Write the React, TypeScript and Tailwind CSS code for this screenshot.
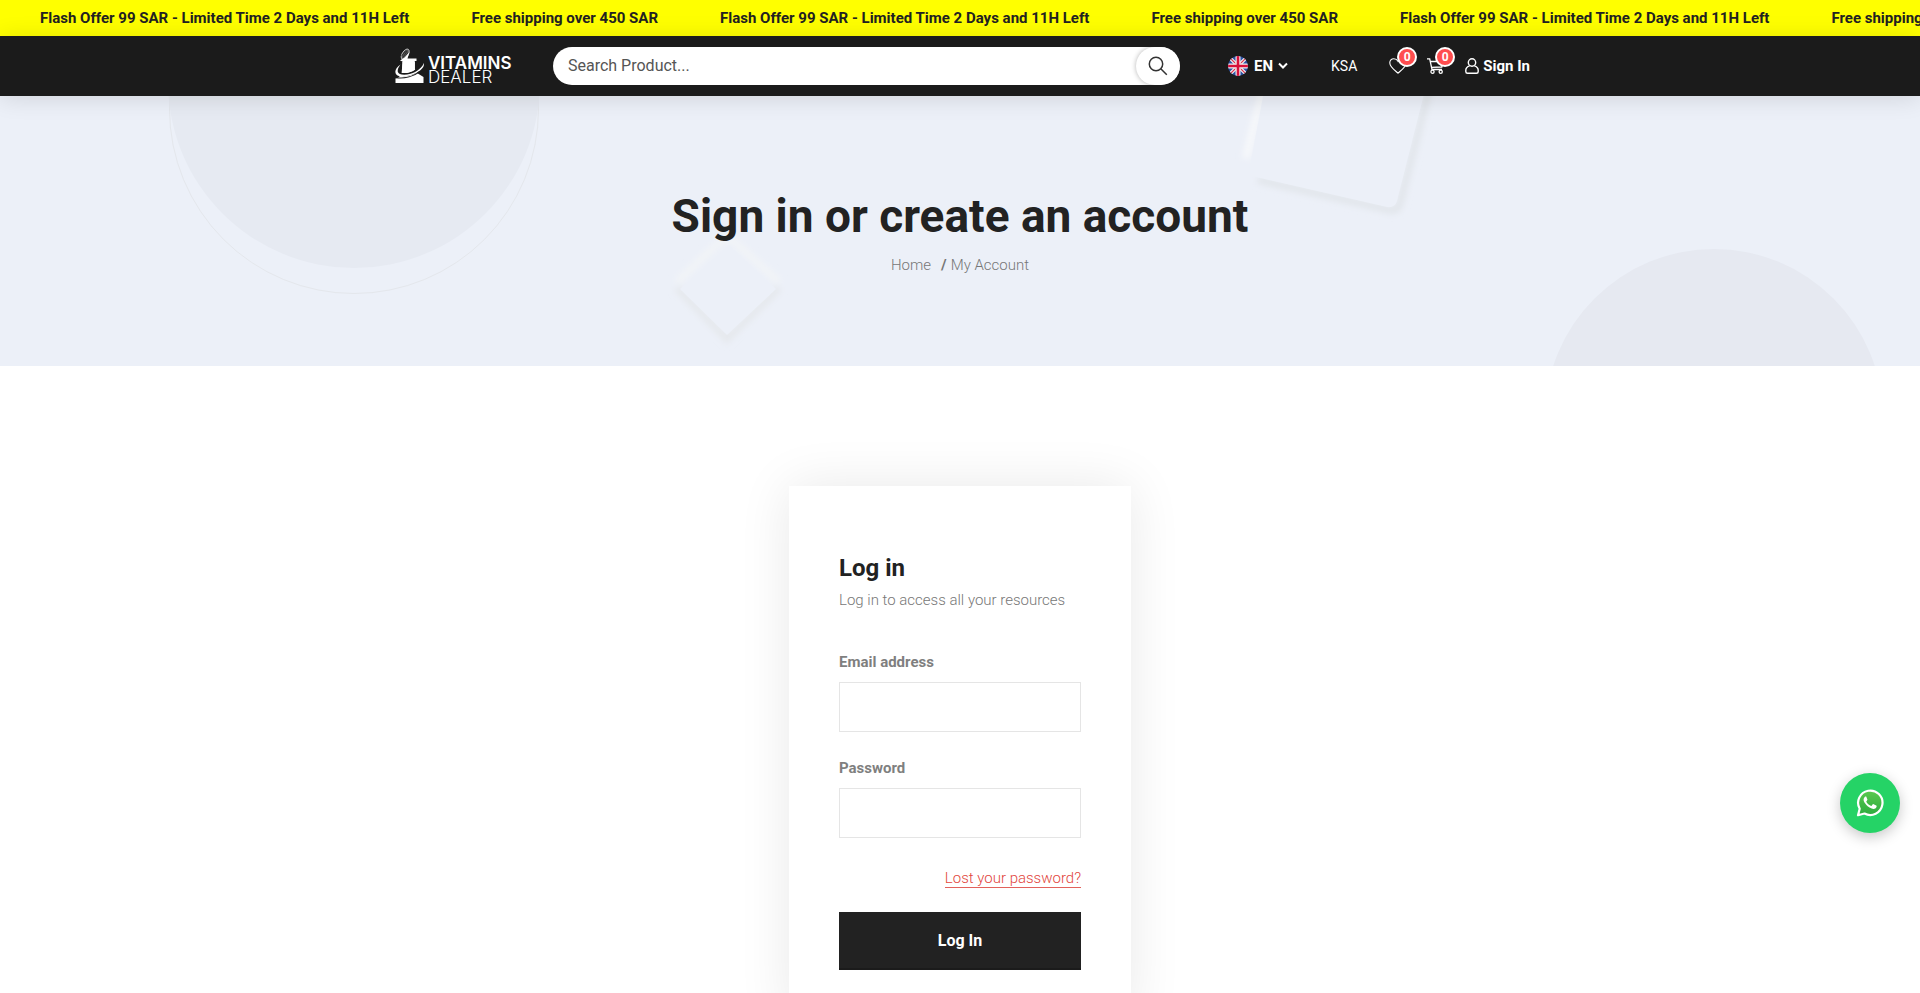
import { useId } from 'react';

const offers = [
  'Flash Offer 99 SAR - Limited Time 2 Days and 11H Left',
  'Free shipping over 450 SAR',
];

function Ticker() {
  return (
    <div className="overflow-hidden bg-[#ffff00] h-9">
      <div className="flex items-center gap-[62px] w-max h-full pl-10 text-[15px] leading-6 font-bold text-[#222]">
        {[...offers, ...offers, ...offers].map((text, idx) => (
          <span key={idx} className="whitespace-nowrap">{text}</span>
        ))}
      </div>
    </div>
  );
}

function Logo() {
  return (
    <a href="#" aria-label="Vitamins Dealer" className="flex items-end gap-[3px] w-[118px] text-white shrink-0">
      <svg width="30" height="36" viewBox="0 0 30 36" className="shrink-0" aria-hidden="true">
        <ellipse cx="10.2" cy="6.2" rx="5.8" ry="3" transform="rotate(-58 10.2 6.2)" fill="#555" stroke="#ccc" strokeWidth="0.8" />
        <path d="M8 9.5 12 3M10 9.5 13 4.5M6.5 8 11 2.5" stroke="#1b1b1b" strokeWidth="0.7" />
        <path d="M5 12.5 9.5 9.5 14.5 4 12.5 10.5H21.5V13H19.8V21L22 25 28.5 29V35H0.5V30.5C4 30 6.5 27 6.8 23L7.5 13.5Z" fill="#fff" />
        <path d="M6.5 14.5C2.5 17 .5 20 1.5 23 2 26 8 27.5 14 26 21 24.5 27 20 28.3 15.5" fill="none" stroke="#1b1b1b" strokeWidth="3.2" />
        <path d="M5.5 16.5C1 19.5-1 23.5 1.3 26.5 4 29.5 11 29 17 26.8 25 24 30 19 28.8 15 27.5 19.5 22 23.8 15.5 25.8 9 27.8 3.5 26.8 2.8 23.8 2.3 21 4 18.5 5.5 16.5Z" fill="#fff" />
        <path d="M1.5 29.8C10 31 19 28 24.5 23.8" fill="none" stroke="#1b1b1b" strokeWidth="1.1" />
        <path d="M7.5 14H19.8V21.5C16 24.5 11 25.5 7 25Z" fill="#fff" />
      </svg>
      <span className="flex flex-col font-[Inter,sans-serif] text-[17px] leading-[14px]">
        <span className="font-semibold">VITAMINS</span>
        <span className="font-light">DEALER</span>
      </span>
    </a>
  );
}

function Flag() {
  const id = useId();
  return (
    <svg width="20" height="20" viewBox="0 0 20 20" aria-hidden="true">
      <clipPath id={id}><circle cx="10" cy="10" r="10" /></clipPath>
      <g clipPath={`url(#${id})`}>
        <path fill="#2b4fa2" d="M0 0h20v20H0z" />
        <path d="M0 0 20 20M20 0 0 20" stroke="#f0f0f0" strokeWidth="3.4" />
        <path d="M0 0 20 20M20 0 0 20" stroke="#d8304a" strokeWidth="1.2" />
        <path d="M10 0V20M0 10H20" stroke="#f0f0f0" strokeWidth="5" />
        <path d="M10 0V20M0 10H20" stroke="#d8103a" strokeWidth="2.6" />
      </g>
    </svg>
  );
}

function Badge() {
  return (
    <span className="absolute -top-[11px] left-2 size-5 rounded-full border-2 border-white bg-[#ff4d4f] text-[12px] leading-4 font-bold text-center">0</span>
  );
}

function Header() {
  return (
    <header className="relative z-10 bg-[#1b1b1b] text-white shadow-[0_2px_24px_rgba(0,0,0,0.12)]">
      <div className="flex items-center h-[60px] max-w-[1140px] mx-auto pl-[5px]">
        <Logo />
        <form className="relative flex h-[38px] w-[627px] shrink ml-10 rounded-full bg-white overflow-hidden" onSubmit={e => e.preventDefault()}>
          <input
            type="search"
            aria-label="Search"
            placeholder="Search Product..."
            className="flex-1 min-w-0 px-[15px] text-base text-[#222] placeholder:text-[#555] outline-none"
          />
          <button type="submit" aria-label="Search" className="flex items-center justify-center w-11 rounded-full bg-white text-[#333] shadow-[0_0_5px_rgba(0,0,0,0.3)]">
            <svg width="20" height="20" viewBox="0 0 20 20" fill="none" stroke="currentColor" strokeWidth="1.5" aria-hidden="true">
              <circle cx="8" cy="8" r="6.7" />
              <path d="m12.8 12.8 6 6" />
            </svg>
          </button>
        </form>
        <button type="button" className="flex items-center ml-12 text-[15px] font-bold">
          <Flag />
          <span className="ml-[6px]">EN</span>
          <svg className="ml-[5px]" width="10" height="8" viewBox="0 0 10 8" fill="none" stroke="currentColor" strokeWidth="2" aria-hidden="true">
            <path d="m1 1.5 4 4 4-4" />
          </svg>
        </button>
        <span className="ml-[43px] text-[14px]">KSA</span>
        <nav className="flex items-center ml-auto">
          <a href="#" aria-label="Wishlist" className="relative w-[18px]">
            <svg width="18" height="16" viewBox="0 0 18 16" fill="none" stroke="currentColor" strokeWidth="1.1" aria-hidden="true">
              <path d="M9 15.2C7 13 1 9.5 0.8 5 0.7 2.5 2.5 0.8 4.8 0.8 6.8 0.8 8.2 1.8 9 3.3 9.8 1.8 11.2 0.8 13.2 0.8 15.5 0.8 17.3 2.5 17.2 5 17 9.5 11 13 9 15.2Z" />
            </svg>
            <Badge />
          </a>
          <a href="#" aria-label="Cart" className="relative w-[18px] ml-5">
            <svg width="18" height="16" viewBox="0 0 18 16" fill="none" stroke="currentColor" strokeWidth="1.3" aria-hidden="true">
              <path d="M0 .8H2.7L5 11.5H15M3.3 3.5H16L14.8 9 4.5 9.4" />
              <circle cx="5.5" cy="13.7" r="1.6" />
              <circle cx="13.7" cy="13.7" r="1.6" />
            </svg>
            <Badge />
          </a>
          <a href="#" className="flex items-center gap-1 ml-5 text-[15px] font-bold">
            <svg width="14" height="16" viewBox="0 0 14 16" fill="none" stroke="currentColor" strokeWidth="1.4" aria-hidden="true">
              <circle cx="7" cy="4.5" r="3.7" />
              <path d="M4.7 7.8C2.2 8.5.8 10 .8 12.3V13.5C.8 14.8 1.5 15.3 2.5 15.3H11.5C12.5 15.3 13.2 14.8 13.2 13.5V12.3C13.2 10 11.8 8.5 9.3 7.8" />
            </svg>
            Sign In
          </a>
        </nav>
      </div>
    </header>
  );
}

function HeroShapes() {
  return (
    <svg className="absolute inset-0 size-full" viewBox="0 0 1920 270" preserveAspectRatio="xMidYMid slice" fill="none" aria-hidden="true">
      <defs>
        <filter id="soft" x="-20%" y="-20%" width="140%" height="140%"><feGaussianBlur stdDeviation="3" /></filter>
      </defs>
      <circle cx="354" cy="13" r="184.5" stroke="#e4e7ec" />
      <circle cx="354" cy="-14" r="186" fill="#e6eaf2" />
      <circle cx="1714" cy="322" r="169" fill="#e6e9f1" />
      <g filter="url(#soft)">
        <path d="M677 192 727 243 779 192" stroke="#e5e8ec" strokeWidth="7" />
        <path d="M677 186 722 144H732L779 186" stroke="#f2f4f7" strokeWidth="7" />
        <path d="M1258 84 1390 114Q1398 116 1400 107L1430 -10" stroke="#e1e5ea" strokeWidth="7" />
        <path d="M1264 -10 1246 62" stroke="#f8f9fb" strokeWidth="7" />
      </g>
      <path d="M729 149 776 193 727 239 680 193Z" fill="#ecf0f8" />
      <path d="M1265 -10 1249 75Q1250 80 1256 81L1387 111Q1395 112 1397 105L1426 -10Z" fill="#ecf0f8" />
    </svg>
  );
}

function Hero() {
  return (
    <section className="relative overflow-hidden bg-[#ecf0f8] h-[270px] pt-[91px] text-center">
      <HeroShapes />
      <div className="relative">
        <h1 className="text-[46px] leading-[58px] font-bold text-[#222]">Sign in or create an account</h1>
        <nav aria-label="Breadcrumb" className="flex justify-center mt-2 text-[15px] leading-6 font-light text-[#777]">
          <a href="#">Home</a>
          <span className="ml-[10px] mr-1 font-bold">/</span>
          <span>My Account</span>
        </nav>
      </div>
    </section>
  );
}

function Field({ id, label, type }: { id: string; label: string; type: string }) {
  return (
    <div className="mb-6">
      <label htmlFor={id} className="block mb-2 text-[15px] leading-6 font-bold text-[#7f7f7f]">{label}</label>
      <input id={id} type={type} className="block w-full h-[50px] px-4 border border-[#e5e5e5] outline-none bg-white" />
    </div>
  );
}

function LoginCard() {
  return (
    <main className="flex justify-center pt-[120px]">
      <form className="w-[342px] px-[50px] pt-16 pb-[50px] bg-white shadow-[0_0_50px_rgba(0,0,0,0.09)]" onSubmit={e => e.preventDefault()}>
        <h2 className="text-[24px] leading-9 font-bold text-[#222]">Log in</h2>
        <p className="mt-[2px] mb-[38px] text-[15px] leading-6 font-light text-[#777]">Log in to access all your resources</p>
        <Field id="email" label="Email address" type="email" />
        <Field id="password" label="Password" type="password" />
        <div className="flex justify-end mt-[31px] mb-6">
          <a href="#" className="border-b border-[#e2625c] text-[15px] leading-[18px] font-light text-[#e2453c]">Lost your password?</a>
        </div>
        <button type="submit" className="w-full h-[58px] bg-[#222] shadow-[inset_0_-2px_0_#1b1b1b] text-base font-bold text-white">Log In</button>
      </form>
    </main>
  );
}

function WhatsAppButton() {
  return (
    <a href="#" aria-label="WhatsApp" className="fixed right-5 bottom-40 flex items-center justify-center size-[60px] rounded-full bg-[#25d366] shadow-[0_4px_14px_rgba(0,0,0,0.22)]">
      <svg width="28" height="28" viewBox="0 0 28 28" aria-hidden="true">
        <defs>
          <linearGradient id="wa" x1="0" y1="0" x2="0" y2="1">
            <stop offset="0" stopColor="#5bc94f" />
            <stop offset="1" stopColor="#2bab3e" />
          </linearGradient>
        </defs>
        <path d="M2 26.2 3.7 19.8A12.2 12.2 0 1 1 8.5 24.5Z" fill="url(#wa)" stroke="#fff" strokeWidth="2.2" strokeLinejoin="round" />
        <path d="M10.2 7.5C9.7 7.4 9.2 7.5 8.7 8 7.3 9.5 7.2 11.5 8.5 13.5 10.4 16.6 12.6 18.5 15.7 19.6 17.8 20.4 20 19.7 20.5 18 20.8 16.8 20.7 16.6 20.2 16.4L17.6 15.2C17.2 15 16.9 15.1 16.6 15.4L15.6 16.7C15.4 16.9 15.1 17 14.7 16.8 12.8 16 11.5 14.8 10.4 13 10.2 12.7 10.2 12.5 10.5 12.2L11.3 11.1C11.5 10.8 11.5 10.6 11.3 10.2Z" fill="#fff" />
      </svg>
    </a>
  );
}

export default function App() {
  return (
    <div className="h-screen overflow-hidden bg-white font-[Roboto,sans-serif]">
      <Ticker />
      <Header />
      <Hero />
      <LoginCard />
      <WhatsAppButton />
    </div>
  );
}
